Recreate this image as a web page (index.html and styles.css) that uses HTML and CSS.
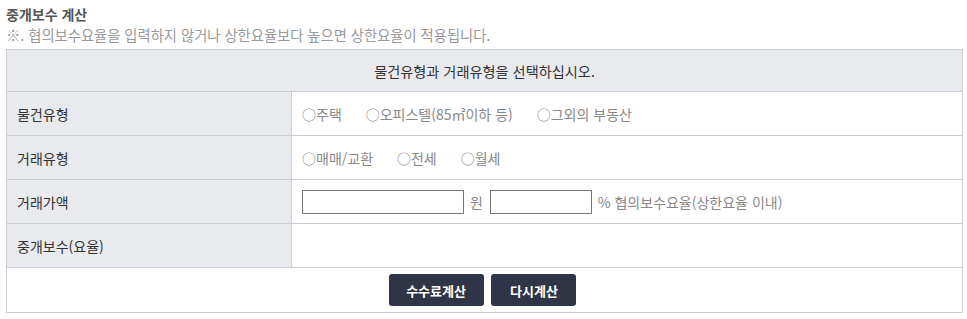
FILE: index.html
```html
<!DOCTYPE html>
<html lang="ko">
<head>
    <meta charset="UTF-8">
    <meta name="viewport" content="width=device-width, initial-scale=1.0">
    <title>중개보수 계산</title>
    <link rel="stylesheet" href="styles.css">
</head>
<body>
    <div class="calc">
        <h2 class="calc-title">중개보수 계산</h2>
        <p class="calc-note">※. 협의보수요율을 입력하지 않거나 상한요율보다 높으면 상한요율이 적용됩니다.</p>

        <table class="calc-table">
            <tr>
                <th colspan="2" class="head">물건유형과 거래유형을 선택하십시오.</th>
            </tr>
            <tr>
                <th>물건유형</th>
                <td>
                    <span class="opt">○주택</span>
                    <span class="opt">○오피스텔(85㎡이하 등)</span>
                    <span class="opt">○그외의 부동산</span>
                </td>
            </tr>
            <tr>
                <th>거래유형</th>
                <td>
                    <span class="opt">○매매/교환</span>
                    <span class="opt">○전세</span>
                    <span class="opt">○월세</span>
                </td>
            </tr>
            <tr>
                <th>거래가액</th>
                <td>
                    <input type="text" class="price">
                    <span class="unit">원</span>
                    <input type="text" class="rate">
                    <span class="unit">% 협의보수요율(상한요율 이내)</span>
                </td>
            </tr>
            <tr>
                <th>중개보수(요율)</th>
                <td></td>
            </tr>
            <tr>
                <td colspan="2" class="actions">
                    <button type="button" class="btn btn-calc">수수료계산</button>
                    <button type="button" class="btn btn-reset">다시계산</button>
                </td>
            </tr>
        </table>
    </div>
</body>
</html>
```

FILE: styles.css
```css
body {
    margin: 0;
    padding: 0;
    background-color: #fff;
    color: #333;
    font-family: "Noto Sans CJK KR", "Noto Sans", sans-serif;
    font-size: 14px;
}

.calc {
    width: 957px;
    margin-left: 6px;
}

.calc-title {
    margin: 0;
    padding-top: 4px;
    font-size: 14px;
    line-height: 20px;
    font-weight: bold;
    color: #555;
}

.calc-note {
    margin: 0 0 3px;
    font-size: 14.3px;
    line-height: 22px;
    color: #999;
}

.calc-table {
    width: 100%;
    border-collapse: collapse;
    border: 1px solid #cbced5;
}

.calc-table th,
.calc-table td {
    border: 1px solid #cbced5;
    height: 43px;
    padding: 0;
    font-size: 14px;
}

.calc-table th {
    width: 285px;
    background-color: #e8eaee;
    color: #333;
    font-weight: normal;
    text-align: left;
    padding-left: 10px;
    box-sizing: border-box;
}

.calc-table th.head {
    width: auto;
    text-align: center;
    padding-left: 0;
    height: 42px;
    font-size: 14.2px;
}

.calc-table td {
    padding-left: 10px;
    color: #888;
}

.opt {
    margin-right: 20px;
}

.calc-table input {
    height: 24px;
    box-sizing: border-box;
    border: 1px solid #767676;
    padding: 0 4px;
    vertical-align: middle;
}

.price {
    width: 162px;
}

.rate {
    width: 102px;
}

.unit {
    vertical-align: middle;
    margin: 0 3px 0 2px;
}

.calc-table td.actions {
    text-align: center;
    padding: 0 4px 0 0;
    height: 44px;
}

.btn {
    background-color: #2f3546;
    color: #fff;
    border: none;
    border-radius: 3px;
    font-family: inherit;
    font-size: 13px;
    font-weight: bold;
    height: 32px;
    padding: 0;
    margin: 0 2px;
    cursor: pointer;
}

.btn-calc {
    width: 95px;
}

.btn-reset {
    width: 85px;
}
```
